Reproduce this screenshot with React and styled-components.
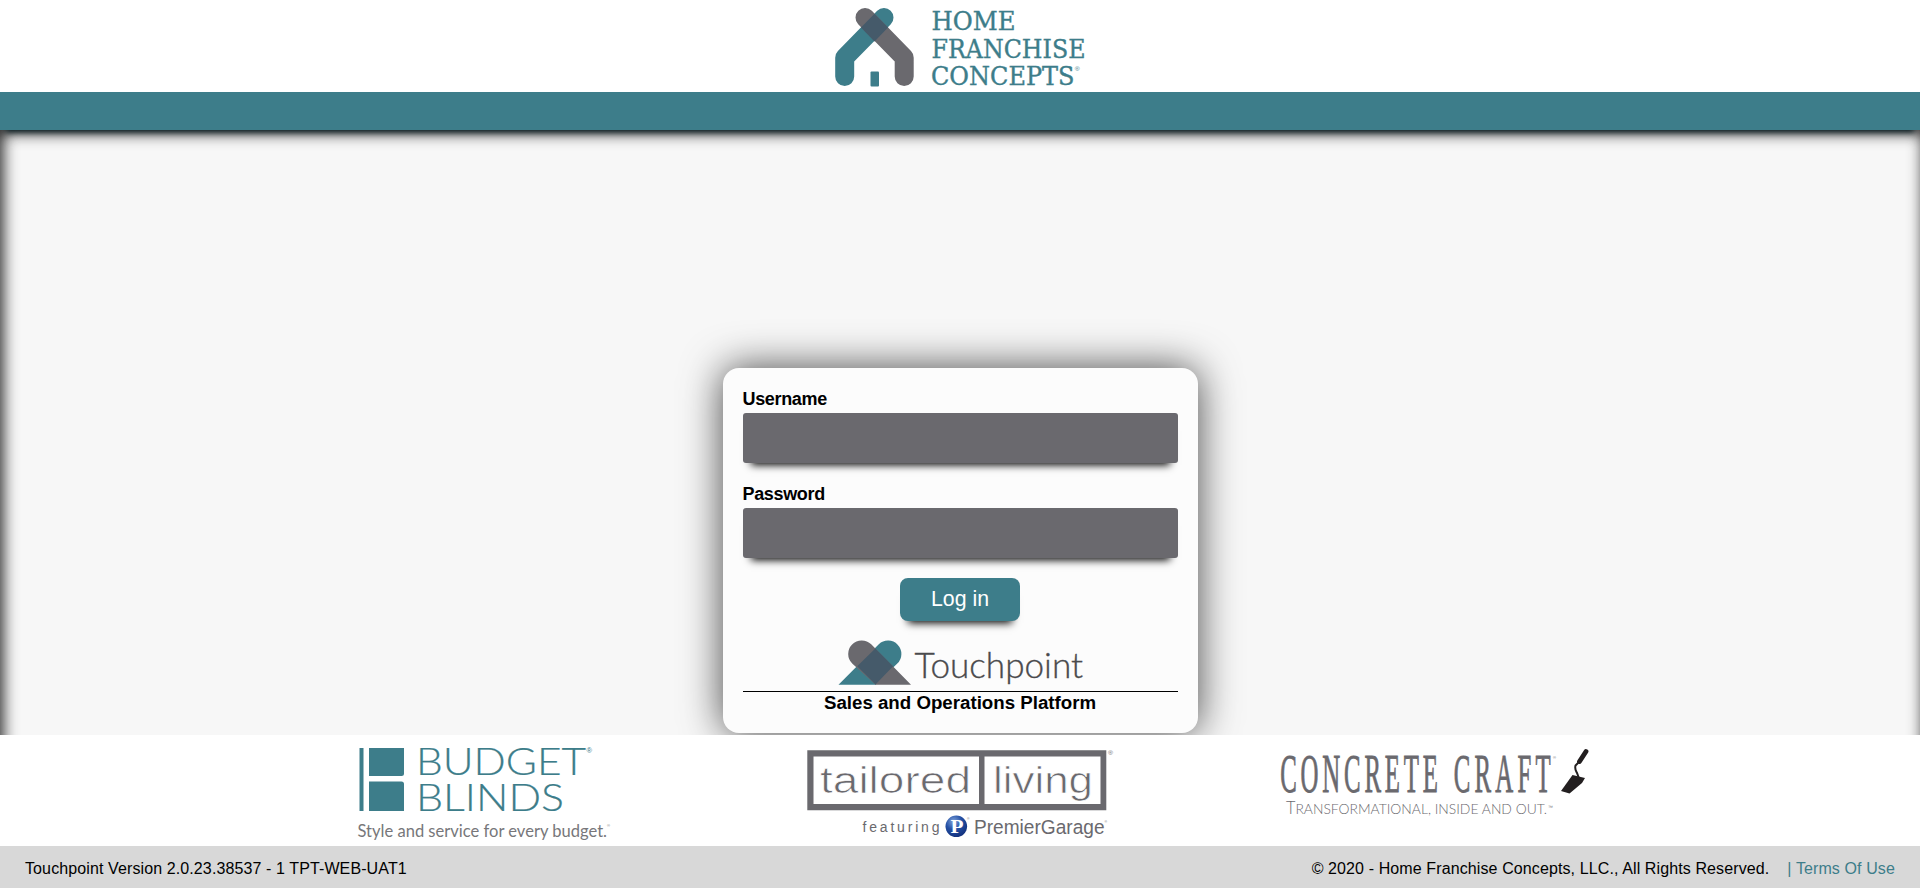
import React from "react";
import styled, { createGlobalStyle } from "styled-components";

const teal = "#3d7d8a";
const slate = "#6a696e";
const overlap = "#455a6a";

const GlobalStyle = createGlobalStyle`
  * { box-sizing: border-box; }
  body { margin: 0; font-family: "Liberation Sans", Arial, sans-serif; color: #000; }
`;

const Page = styled.div`
  height: 100vh;
  display: flex;
  flex-direction: column;
  background: #fff;
  overflow: hidden;
`;

const Header = styled.header`
  height: 92px;
  flex: none;
  display: flex;
  justify-content: center;
`;

const NavBar = styled.div`
  position: relative;
  z-index: 1;
  height: 38px;
  flex: none;
  background: ${teal};
  box-shadow: 0 8px 6px -6px #04181d;
`;

/* Runs on beneath the brand strip, which hides its lower inner shadow. */
const Main = styled.main`
  flex: 1;
  min-height: 0;
  margin-bottom: -40px;
  display: flex;
  justify-content: center;
  align-items: flex-end;
  padding-bottom: 42px;
  overflow: hidden;
  background: #f7f7f7;
  box-shadow: inset 3px 3px 15px #232323;
`;

const Card = styled.form`
  width: 475px;
  height: 365px;
  padding: 20px;
  display: flex;
  flex-direction: column;
  align-items: center;
  background: #fcfcfc;
  border-radius: 16px;
  box-shadow: 0 0 40px rgba(0, 0, 0, 0.72);
`;

const Field = styled.label`
  width: 100%;
  height: 95px;
  flex: none;
  display: flex;
  flex-direction: column;
  font-size: 18px;
  font-weight: 700;
  line-height: 23px;
  letter-spacing: -0.34px;
`;

const Input = styled.input`
  width: 100%;
  height: 50px;
  margin-top: 2px;
  padding: 0 12px;
  border: 0;
  border-radius: 3px;
  outline: 0;
  background: ${slate};
  color: #fff;
  font-size: 18px;
  box-shadow: 0 10px 8px -8px #000;
`;

const LoginButton = styled.button`
  width: 120px;
  height: 43px;
  flex: none;
  padding: 0 0 1px;
  border: 0;
  border-radius: 8px;
  background: ${teal};
  color: #fff;
  font: 21.3px "Liberation Sans", Arial, sans-serif;
  box-shadow: 0 10px 8px -8px #000;
`;

const ProductMark = styled.div`
  width: 100%;
  height: 71px;
  flex: none;
  padding: 14px 7px 0 0;
  display: flex;
  justify-content: center;
  border-bottom: 1px solid #000;
`;

const Tagline = styled.div`
  font-size: 18.7px;
  font-weight: 700;
  line-height: 21px;
`;

const BrandStrip = styled.section`
  position: relative;
  z-index: 1;
  height: 111px;
  flex: none;
  padding-left: 340px;
  display: flex;
  gap: 145px;
  background: #fff;
`;

const Footer = styled.footer`
  height: 42px;
  flex: none;
  padding: 3px 25px 0;
  display: flex;
  align-items: center;
  justify-content: space-between;
  background: #d8d8d8;
  font-size: 16px;
  letter-spacing: 0.11px;
`;

const Legal = styled.div`
  display: flex;
  gap: 18px;
`;

const Terms = styled.a`
  color: ${teal};
  text-decoration: none;
`;

const Drawing = styled.svg`
  display: block;
  flex: none;
  overflow: visible;
`;

const Word = ({ x, y, w, size, family, fill, weight = 400, children, ...rest }) => (
  <text x={x} y={y} textLength={w} lengthAdjust="spacingAndGlyphs" fontSize={size} fontFamily={family} fontWeight={weight} fill={fill} {...rest}>
    {children}
  </text>
);

const slab = '"DejaVu Serif", serif';
const lato = 'Lato, sans-serif';
const sans = '"Liberation Sans", sans-serif';
const serif = '"Liberation Serif", serif';

function FranchiseLogo() {
  const line = { size: 26, family: slab, fill: teal, stroke: teal, strokeWidth: 0.4 };
  return (
    <Drawing width="280" height="92" viewBox="0 0 280 92">
      <g fill="none" strokeWidth="19" strokeLinejoin="round" strokeLinecap="round">
        <path d="M24.7 76.5V57.7L64 17.5" stroke={teal} />
        <path d="M84.2 76.5V57.7L45 17.5" stroke={slate} />
      </g>
      <path d="M54.5 13.7L68 27.5L54.5 41.4L41 27.5Z" fill={overlap} />
      <rect x="50.5" y="71.5" width="8.5" height="15" rx="1" fill={teal} />
      <Word x="111.5" y="30.3" w="84" {...line}>HOME</Word>
      <Word x="111.5" y="57.5" w="154" {...line}>FRANCHISE</Word>
      <Word x="111" y="84.800" w="143.500" {...line}>CONCEPTS</Word>
      <Word x="254.800" y="71" w="5" size="6" family={sans} fill={teal}>®</Word>
    </Drawing>
  );
}

function TouchpointLogo() {
  return (
    <Drawing width="250" height="50" viewBox="0 0 250 50">
      <path d="M6.5 49.7L46.8 9.3A13.3 13.3 0 0 1 65.3 28.5L43.5 49.7Z" fill={teal} />
      <path d="M79 49.7L39.2 9.3A13.3 13.3 0 0 0 20.2 28.5L43.5 49.7Z" fill={slate} />
      <path d="M43.3 13.5L61.1 31.3L43.5 49.4L25.2 31.3Z" fill={overlap} />
      <Word x="82.5" y="42.5" w="168.500" size="35" family={lato} weight="300" fill="#4a4a4c" stroke="#4a4a4c" strokeWidth=".35">Touchpoint</Word>
    </Drawing>
  );
}

function BudgetBlinds() {
  return (
    <Drawing width="305" height="111" viewBox="0 5 305 111">
      <path d="M19.5 18h4v63h-4zM29 18h35v25.5q0 2.5-2.500 2.500H29zM29 51.500h32.500q2.500 0 2.500 2.500V81H29z" fill={teal} />
      <Word x="76" y="45" w="170" size="38" family={lato} weight="300" fill={teal} stroke={teal} strokeWidth=".2">BUDGET</Word>
      <Word x="76" y="81" w="148" size="38" family={lato} weight="300" fill={teal} stroke={teal} strokeWidth=".2">BLINDS</Word>
      <Word x="246.5" y="23" w="5.5" size="7" family={sans} fill={teal}>®</Word>
      <Word x="17.5" y="106.500" w="249.500" size="16.500" family={lato} fill="#77777a">Style and service for every budget.</Word>
      <Word x="267" y="97" w="3" size="4" family={sans} fill="#77777a">®</Word>
    </Drawing>
  );
}

function TailoredLiving() {
  return (
    <Drawing width="325" height="111" viewBox="0 5 325 111">
      <defs>
        <radialGradient id="badge" cx="38%" cy="28%" r="75%">
          <stop offset="0" stopColor="#7fa3dc" />
          <stop offset=".5" stopColor="#2450a4" />
          <stop offset="1" stopColor="#12307c" />
        </radialGradient>
      </defs>
      <path d="M17.300 20.300h299v60h-299zM23.500 26.500v47.500h165.500v-47.500zM194.500 26.500v47.500h116v-47.500z" fill={slate} fillRule="evenodd" />
      <Word x="30" y="62.500" w="151" size="36" family={sans} fill={slate} stroke="#fff" strokeWidth=".7">tailored</Word>
      <Word x="203" y="62.500" w="100" size="36" family={sans} fill={slate} stroke="#fff" strokeWidth=".7">living</Word>
      <Word x="318" y="25" w="5" size="6" family={sans} fill={slate}>®</Word>
      <text x="72.500" y="101.500" textLength="77" lengthAdjust="spacing" fontFamily={sans} fontSize="14" fill={slate}>featuring</text>
      <circle cx="166.300" cy="96.300" r="10.800" fill="url(#badge)" />
      <Word x="160.500" y="103" w="13" size="19" family={serif} weight="700" fill="#fff">P</Word>
      <Word x="177" y="90" w="2.500" size="4" family={sans} fill={slate}>®</Word>
      <Word x="184" y="103.500" w="130.500" size="20.500" family={sans} fill={slate}>PremierGarage</Word>
      <Word x="314.500" y="93" w="2.500" size="4" family={sans} fill={slate}>®</Word>
    </Drawing>
  );
}

function ConcreteCraft() {
  const face = { y: 0, lengthAdjust: "spacing", fontFamily: serif, fontSize: 54, fill: slate, stroke: slate, strokeWidth: 0.9 };
  return (
    <Drawing width="344" height="111" viewBox="0 5 344 111">
      <g transform="translate(0 61.700) scale(.46 1)">
        <text x="44" textLength="343" {...face}>CONCRETE</text>
        <text x="421" textLength="211" {...face}>CRAFT</text>
      </g>
      <Word x="293" y="29" w="3" size="4" family={sans} fill={slate}>®</Word>
      <text x="26" y="84" textLength="261" lengthAdjust="spacingAndGlyphs" fontFamily={lato} fontWeight="300" fontSize="14.500" fill={slate}>
        <tspan fontSize="17">T</tspan>RANSFORMATIONAL, INSIDE AND OUT.
      </text>
      <Word x="288" y="79" w="5" size="5" family={sans} fill="#77777a">™</Word>
      <g fill="none" stroke="#231f20" strokeLinecap="round">
        <path d="M326 21.500L319.500 31.500" strokeWidth="4.800" />
        <path d="M318 33L315.500 35.500C314.500 39.500 316 41 317 43L318.500 47" strokeWidth="2" />
      </g>
      <path d="M312.500 45L325 48L322 53L309.500 63.500L301 61Z" fill="#231f20" />
    </Drawing>
  );
}

export default function App() {
  return (
    <Page>
      <GlobalStyle />
      <Header><FranchiseLogo /></Header>
      <NavBar />
      <Main>
        <Card>
          <Field>Username<Input type="text" /></Field>
          <Field>Password<Input type="password" /></Field>
          <LoginButton type="button">Log in</LoginButton>
          <ProductMark><TouchpointLogo /></ProductMark>
          <Tagline>Sales and Operations Platform</Tagline>
        </Card>
      </Main>
      <BrandStrip>
        <BudgetBlinds />
        <TailoredLiving />
        <ConcreteCraft />
      </BrandStrip>
      <Footer>
        <span>Touchpoint Version 2.0.23.38537 - 1 TPT-WEB-UAT1</span>
        <Legal>
          <span>© 2020 - Home Franchise Concepts, LLC., All Rights Reserved.</span>
          <Terms>| Terms Of Use</Terms>
        </Legal>
      </Footer>
    </Page>
  );
}
